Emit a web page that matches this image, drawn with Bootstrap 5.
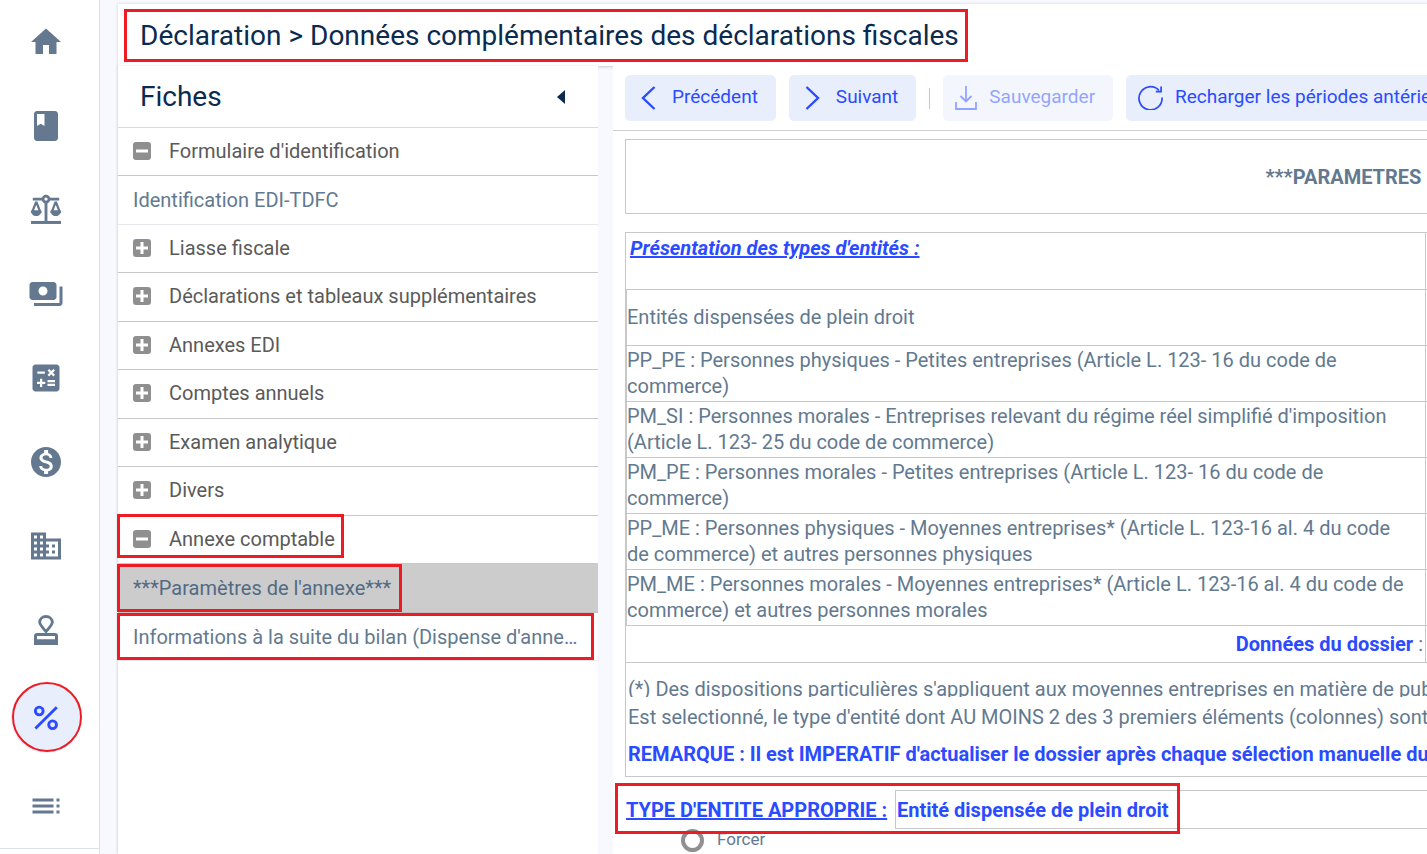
<!DOCTYPE html>
<html lang="fr">
<head>
<meta charset="utf-8">
<meta name="viewport" content="width=device-width, initial-scale=1">
<title>Données complémentaires des déclarations fiscales</title>
<link rel="stylesheet" href="https://cdn.jsdelivr.net/npm/bootstrap@5.3.0/dist/css/bootstrap.min.css">
<style>
  :root { --ink: #0b2a4f; --slate: #62798f; --accent: #2a4bff; --soft: #e8eefc; --line: #c8c8c8; --mark-red: #ed1c24; }
  body { font-family: Roboto, "Liberation Sans", sans-serif; font-size: 20px; color: var(--slate); background: #f8f9fe; }
  button { font: inherit; }

  .side-rail { width: 100px; padding-right: 7px; border-right: 1px solid #dcdfe8; }
  .rail-link { height: 84px; color: #64798f; }
  .rail-link svg { width: 36px; height: 36px; fill: currentColor; }
  .rail-link.current { height: 92px; color: var(--accent); }
  .rail-disc { width: 70px; height: 70px; background: var(--soft); border-radius: 50%; }
  .rail-disc::after { content: ""; position: absolute; inset: -1px -1px 1px 1px; border: 2px solid var(--mark-red); border-radius: 50%; }
  .rail-end { border-top: 1px solid #dcdfe8; margin-right: -7px; }

  .workspace { padding: 4px 0 0 18px; }
  .page-head { border-bottom: 1px solid #d5d9e2; padding: 5px 6px 4px; box-shadow: 0 0 3px rgba(40, 50, 80, .2); }
  .page-head h1 { font-size: 28px; line-height: 47px; color: var(--ink); border: 3px solid var(--mark-red); padding: 0 6px 0 13px; }

  .sheets { width: 480px; box-shadow: -1px 0 2px rgba(40, 50, 80, .15); margin-top: -1px; }
  .sheets-head { height: 62px; padding: 0 30px 0 22px; border-bottom: 1px solid #d5d9e2; }
  .sheets-head h2 { font-size: 28px; line-height: 34px; color: var(--ink); }
  .tree li { height: 48px; border-bottom: 1px solid var(--line); padding: 0 15px 2px; }
  .tree li:nth-child(even) { height: 49px; }
  .tree li.leaf { border-color: #e6e8ee; padding-bottom: 0; }
  .tree li.chosen { background: #ccc; border-color: #c0c0c0; }
  .tree button { color: #5a5a5a; gap: 18px; font-size: 20px; }
  .tree a { color: var(--slate); line-height: 48px; }
  .tree li.chosen a { color: #526a84; }
  .toggle-box { width: 18px; height: 18px; }
  .framed { position: relative; }
  .framed::after { content: ""; position: absolute; inset: 0 -11px 0 -16px; border: 3px solid var(--mark-red); pointer-events: none; }
  button.framed::after { inset: -2px -9px 3px -16px; }

  .editor { min-width: 0; margin-left: 15px; margin-top: -1px; }
  .tools { padding: 9px 12px; gap: 13px; border-bottom: 1px solid #cfcfcf; }
  .tool { height: 46px; border: 0; border-radius: 5px; padding: 0 18px 1px 16px; gap: 16px; background: var(--soft); color: var(--accent); font-size: 19px; white-space: nowrap; }
  .tool.snug { padding-left: 12px; gap: 12px; }
  .tool:disabled { opacity: .5; color: var(--accent); }
  .tool svg { fill: none; stroke: currentColor; flex: none; }
  .tool-sep { flex: none; width: 1px; height: 21px; background: #c6c6c6; }
  .sheet-form { padding: 8px 0 0 12px; width: 1600px; }
  .form-title { border: 1px solid var(--line); height: 75px; font-weight: 700; }
  .form-block { border: 1px solid var(--line); margin-top: 18px; }
  .entities { table-layout: fixed; width: 100%; line-height: 26px; border-collapse: separate; border-spacing: 0; }
  .entities td, .entities th { height: 56px; padding: 1px 14px 2px 1px; vertical-align: middle; border: solid var(--line); border-width: 0 1px 1px 0; }
  .entities tbody td:first-child { border-left-width: 1px; padding-left: 0; }
  .entities thead th { height: 57px; padding-top: 2px; vertical-align: top; padding-left: 4px; }
  .entities tfoot td { height: 37px; padding: 0 2px 1px; }
  .col-entity { width: 800px; }
  .accent-b { color: var(--accent); font-weight: 700; }
  .note-cut { height: 22px; line-height: 28px; margin-top: 12px; overflow: hidden; }
  .note-full { line-height: 40px; }
  .note-bold { line-height: 34px; padding-bottom: 5px; }
  .notes { padding-left: 2px; white-space: nowrap; }
  .pick-row { margin-top: 13px; }
  .pick-row label { width: 270px; padding-left: 1px; }
  .pick-row input { height: 39px; border: 1px solid var(--line); padding: 0 1px; outline: 0; }
  .pick-frame { position: absolute; left: -10px; top: -7px; width: 565px; height: 51px; border: 3px solid var(--mark-red); pointer-events: none; z-index: 1; }
  .force-row { padding-left: 56px; gap: 13px; font-size: 17px; line-height: 20px; }
  .force-row input { appearance: none; width: 23px; height: 23px; border: 4px solid #909090; border-radius: 50%; margin: 0; background: #fff; }
</style>
</head>
<body class="vh-100 overflow-hidden">
<div class="d-flex h-100">
  <nav class="side-rail bg-white flex-shrink-0" aria-label="Menu principal">
    <a class="rail-link d-flex align-items-center justify-content-center" href="#" aria-label="Accueil"><svg viewBox="0 0 24 24"><path d="M10 20v-6h4v6h5v-8h3L12 3 2 12h3v8z"/></svg></a>
    <a class="rail-link d-flex align-items-center justify-content-center" href="#" aria-label="Journal"><svg viewBox="0 0 24 24"><path d="M18 2H6c-1.100 0-2 .9-2 2v16c0 1.100.9 2 2 2h12c1.100 0 2-.9 2-2V4c0-1.100-.9-2-2-2zM6 4h5v8l-2.500-1.500L6 12z"/></svg></a>
    <a class="rail-link d-flex align-items-center justify-content-center" href="#" aria-label="Balance"><svg viewBox="0 0 24 24"><g fill="none" stroke="currentColor"><circle cx="12" cy="4.700" r="2" stroke-width="1.800"/><path stroke-width="1.900" d="M3.200 4.700h6.800M14 4.700h6.800M12 6.700V20"/><path stroke-width="2" d="M2 20.300h20"/><path stroke-width="1.500" d="M5.500 6.500 2.900 13h5.200L5.500 6.500M18.500 6.500 15.900 13h5.200L18.500 6.500"/></g><path d="M2 12.300h7c0 2.200-1.500 3.700-3.500 3.700S2 14.500 2 12.300zM15 12.300h7c0 2.200-1.500 3.700-3.500 3.700S15 14.500 15 12.300z"/></svg></a>
    <a class="rail-link d-flex align-items-center justify-content-center" href="#" aria-label="Paiements"><svg viewBox="0 0 24 24"><path d="M19 14V6c0-1.100-.9-2-2-2H3c-1.100 0-2 .9-2 2v8c0 1.100.9 2 2 2h14c1.100 0 2-.9 2-2zm-9-1c-1.660 0-3-1.340-3-3s1.340-3 3-3 3 1.340 3 3-1.340 3-3 3zm13-6v11c0 1.100-.9 2-2 2H4v-2h17V7z"/></svg></a>
    <a class="rail-link d-flex align-items-center justify-content-center" href="#" aria-label="Calculs"><svg viewBox="0 0 24 24"><path d="M19 3H5c-1.100 0-2 .9-2 2v14c0 1.100.9 2 2 2h14c1.100 0 2-.9 2-2V5c0-1.100-.9-2-2-2zm-5.970 4.060L14.090 6l1.410 1.410L16.910 6l1.060 1.060-1.410 1.410 1.410 1.410-1.060 1.060-1.410-1.400-1.410 1.410-1.060-1.060 1.410-1.410zM6.250 7.720h5v1.500h-5zM11.500 16h-2v2H8v-2H6v-1.500h2v-2h1.500v2h2zm6.500 1.250h-5v-1.500h5zm0-2.500h-5v-1.500h5z"/></svg></a>
    <a class="rail-link d-flex align-items-center justify-content-center" href="#" aria-label="Trésorerie"><svg viewBox="0 0 24 24"><path d="M12 2C6.480 2 2 6.480 2 12s4.480 10 10 10 10-4.480 10-10S17.520 2 12 2zm1.410 16.090V20h-2.670v-1.930c-1.710-.36-3.160-1.460-3.270-3.400h1.960c.1 1.050.82 1.870 2.650 1.870 1.960 0 2.400-.98 2.400-1.590 0-.83-.44-1.610-2.670-2.140-2.480-.6-4.180-1.620-4.180-3.670 0-1.720 1.390-2.840 3.110-3.210V4h2.670v1.950c1.860.45 2.790 1.860 2.850 3.390H14.300c-.05-1.110-.64-1.870-2.220-1.870-1.500 0-2.400.68-2.400 1.640 0 .84.65 1.390 2.670 1.910s4.180 1.390 4.180 3.910c-.01 1.830-1.380 2.830-3.120 3.160z"/></svg></a>
    <a class="rail-link d-flex align-items-center justify-content-center" href="#" aria-label="Société"><svg viewBox="0 0 24 24"><path d="M12 7V3H2v18h20V7H12zM6 19H4v-2h2v2zm0-4H4v-2h2v2zm0-4H4V9h2v2zm0-4H4V5h2v2zm4 12H8v-2h2v2zm0-4H8v-2h2v2zm0-4H8V9h2v2zm0-4H8V5h2v2zm10 12h-8v-2h2v-2h-2v-2h2v-2h-2V9h8v10zm-2-8h-2v2h2v-2zm0 4h-2v2h2v-2z"/></svg></a>
    <a class="rail-link d-flex align-items-center justify-content-center" href="#" aria-label="Validation"><svg viewBox="0 0 24 24"><path fill="none" stroke="currentColor" stroke-width="1.900" d="M12 3C9.500 3 7.800 4.700 7.800 6.900c0 1.400.7 2.300 4.200 6.200 3.500-3.900 4.200-4.800 4.200-6.200C16.200 4.700 14.500 3 12 3z"/><path d="M6 14h12a2 2 0 0 1 2 2v6H4v-6a2 2 0 0 1 2-2zm0 2v2.200h12V16z"/></svg></a>
    <a class="rail-link current d-flex align-items-center justify-content-center" href="#" aria-label="Fiscalité"><span class="rail-disc position-relative d-flex align-items-center justify-content-center"><svg viewBox="0 0 24 24"><g fill="none" stroke="currentColor" stroke-width="1.900"><circle cx="7.500" cy="7.300" r="2.600"/><circle cx="16.400" cy="16.500" r="2.600"/><path d="M4.900 19 19.200 4.900"/></g></svg></span></a>
    <a class="rail-link d-flex align-items-center justify-content-center" href="#" aria-label="Listes"><svg viewBox="0 0 24 24"><path d="M3 9h14V7H3v2zm0 4h14v-2H3v2zm0 4h14v-2H3v2zm16 0h2v-2h-2v2zm0-10v2h2V7h-2zm0 6h2v-2h-2v2z"/></svg></a>
    <div class="rail-end"></div>
  </nav>

  <div class="workspace flex-fill d-flex flex-column overflow-hidden">
    <header class="page-head bg-white">
      <h1 class="d-inline-block fw-normal m-0 align-top">Déclaration &gt; Données complémentaires des déclarations fiscales</h1>
    </header>
    <div class="d-flex flex-fill">
      <section class="sheets bg-white flex-shrink-0">
        <div class="sheets-head d-flex align-items-center justify-content-between">
          <h2 class="fw-normal m-0">Fiches</h2>
          <button class="btn p-0 border-0 d-flex" aria-label="Replier"><svg width="14" height="14" viewBox="0 0 14 14"><path fill="#0b2a4f" d="M11 0v14L3 7z"/></svg></button>
        </div>
        <ul class="tree list-unstyled m-0">
          <li class="d-flex"><button class="btn border-0 p-0 d-flex align-items-center"><svg class="toggle-box" viewBox="0 0 18 18"><rect width="18" height="18" rx="3" fill="#8f8f8f"/><path stroke="#fff" stroke-width="3" d="M3 9h12"/></svg>Formulaire d'identification</button></li>
          <li class="leaf"><a class="text-decoration-none d-block text-truncate" href="#">Identification EDI-TDFC</a></li>
          <li class="d-flex"><button class="btn border-0 p-0 d-flex align-items-center"><svg class="toggle-box" viewBox="0 0 18 18"><rect width="18" height="18" rx="3" fill="#8f8f8f"/><path stroke="#fff" stroke-width="3" d="M3 9h12M9 3v12"/></svg>Liasse fiscale</button></li>
          <li class="d-flex"><button class="btn border-0 p-0 d-flex align-items-center"><svg class="toggle-box" viewBox="0 0 18 18"><rect width="18" height="18" rx="3" fill="#8f8f8f"/><path stroke="#fff" stroke-width="3" d="M3 9h12M9 3v12"/></svg>Déclarations et tableaux supplémentaires</button></li>
          <li class="d-flex"><button class="btn border-0 p-0 d-flex align-items-center"><svg class="toggle-box" viewBox="0 0 18 18"><rect width="18" height="18" rx="3" fill="#8f8f8f"/><path stroke="#fff" stroke-width="3" d="M3 9h12M9 3v12"/></svg>Annexes EDI</button></li>
          <li class="d-flex"><button class="btn border-0 p-0 d-flex align-items-center"><svg class="toggle-box" viewBox="0 0 18 18"><rect width="18" height="18" rx="3" fill="#8f8f8f"/><path stroke="#fff" stroke-width="3" d="M3 9h12M9 3v12"/></svg>Comptes annuels</button></li>
          <li class="d-flex"><button class="btn border-0 p-0 d-flex align-items-center"><svg class="toggle-box" viewBox="0 0 18 18"><rect width="18" height="18" rx="3" fill="#8f8f8f"/><path stroke="#fff" stroke-width="3" d="M3 9h12M9 3v12"/></svg>Examen analytique</button></li>
          <li class="d-flex"><button class="btn border-0 p-0 d-flex align-items-center"><svg class="toggle-box" viewBox="0 0 18 18"><rect width="18" height="18" rx="3" fill="#8f8f8f"/><path stroke="#fff" stroke-width="3" d="M3 9h12M9 3v12"/></svg>Divers</button></li>
          <li class="d-flex"><button class="framed btn border-0 p-0 d-flex align-items-center"><svg class="toggle-box" viewBox="0 0 18 18"><rect width="18" height="18" rx="3" fill="#8f8f8f"/><path stroke="#fff" stroke-width="3" d="M3 9h12"/></svg>Annexe comptable</button></li>
          <li class="leaf chosen d-flex"><span class="framed"><a class="text-decoration-none d-block" href="#">***Paramètres de l'annexe***</a></span></li>
          <li class="leaf d-flex"><span class="framed d-flex mw-100"><a class="text-decoration-none d-block text-truncate" href="#">Informations à la suite du bilan (Dispense d'annexe comptable)</a></span></li>
        </ul>
      </section>

      <main class="editor bg-white flex-fill overflow-hidden">
        <div class="tools d-flex align-items-center">
          <button class="tool d-flex align-items-center"><svg width="15" height="24" viewBox="0 0 15 24" stroke-width="2.400"><path d="M13.500 1 2 12l11.500 11"/></svg>Précédent</button>
          <button class="tool d-flex align-items-center"><svg width="15" height="24" viewBox="0 0 15 24" stroke-width="2.400"><path d="M1.500 1 13 12 1.500 23"/></svg>Suivant</button>
          <span class="tool-sep"></span>
          <button class="tool snug d-flex align-items-center" disabled><svg width="22" height="24" viewBox="0 0 22 24" stroke-width="1.800"><path d="M11 0v15M5.500 10 11 15.500l5.500-5.500M1 16v7h20v-7"/></svg>Sauvegarder</button>
          <button class="tool snug d-flex align-items-center"><svg width="25" height="25" viewBox="0 0 26 26" stroke-width="1.800"><path d="M25 13a12 12 0 1 1-3.300-7.500M24 1.500v5.300h-5.500"/></svg>Recharger les périodes antérieures</button>
        </div>
        <form class="sheet-form">
          <div class="form-title d-flex align-items-center justify-content-center">***PARAMETRES DE L'ANNEXE***</div>
          <div class="form-block">
            <table class="entities">
              <colgroup><col class="col-entity"><col></colgroup>
              <thead><tr><th class="accent-b fst-italic text-decoration-underline">Présentation des types d'entités :</th><th></th></tr></thead>
              <tbody>
                <tr><td>Entités dispensées de plein droit</td><td></td></tr>
                <tr><td>PP_PE : Personnes physiques - Petites entreprises (Article L. 123- 16 du code de commerce)</td><td></td></tr>
                <tr><td>PM_SI : Personnes morales - Entreprises relevant du régime réel simplifié d'imposition (Article L. 123- 25 du code de commerce)</td><td></td></tr>
                <tr><td>PM_PE : Personnes morales - Petites entreprises (Article L. 123- 16 du code de commerce)</td><td></td></tr>
                <tr><td>PP_ME : Personnes physiques - Moyennes entreprises* (Article L. 123-16 al. 4 du code de commerce) et autres personnes physiques</td><td></td></tr>
                <tr><td>PM_ME : Personnes morales - Moyennes entreprises* (Article L. 123-16 al. 4 du code de commerce) et autres personnes morales</td><td></td></tr>
              </tbody>
              <tfoot><tr><td class="text-end"><span class="accent-b">Données du dossier</span> :</td><td></td></tr></tfoot>
            </table>
            <div class="notes">
              <div class="note-cut">(*) Des dispositions particulières s'appliquent aux moyennes entreprises en matière de publicité des comptes.</div>
              <div class="note-full">Est selectionné, le type d'entité dont AU MOINS 2 des 3 premiers éléments (colonnes) sont respectés.</div>
              <div class="note-bold accent-b">REMARQUE : Il est IMPERATIF d'actualiser le dossier après chaque sélection manuelle du type d'entité.</div>
            </div>
          </div>
          <div class="pick-row position-relative d-flex align-items-center">
            <label class="accent-b text-decoration-underline" for="entity">TYPE D'ENTITE APPROPRIE :</label>
            <input id="entity" class="accent-b flex-fill" type="text" value="Entité dispensée de plein droit" readonly>
            <span class="pick-frame"></span>
          </div>
          <div class="force-row d-flex align-items-start">
            <input id="force" type="radio" name="mode"><label for="force">Forcer</label>
          </div>
        </form>
      </main>
    </div>
  </div>
</div>
<script src="https://cdn.jsdelivr.net/npm/bootstrap@5.3.0/dist/js/bootstrap.bundle.min.js"></script>
</body>
</html>
